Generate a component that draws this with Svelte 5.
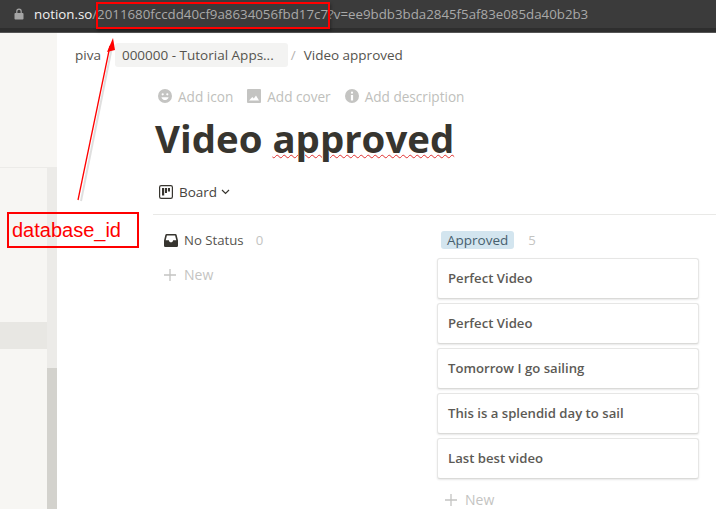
<script lang="ts">
  const cards = ['Perfect Video', 'Perfect Video', 'Tomorrow I go sailing', 'This is a splendid day to sail', 'Last best video'];
</script>

<div class="page">
  <header class="browser">
    <div class="omnibox">
      <svg class="lock" width="10" height="12" viewBox="0 0 10 12"><path d="M2.2 5V3.4a2.8 2.8 0 0 1 5.6 0V5h.9c.4 0 .8.4.8.8v5c0 .5-.4.8-.8.8H1.3c-.4 0-.8-.3-.8-.8v-5c0-.4.4-.8.8-.8zm1.2 0h3.2V3.4a1.6 1.6 0 0 0-3.2 0z" fill="#a5a5a5" fill-rule="evenodd"/></svg>
      <span class="host">notion.so</span><span class="path">/2011680fccdd40cf9a8634056fbd17c7?v=ee9bdb3bda2845f5af83e085da40b2b3</span>
    </div>
  </header>

  <div class="body">
    <aside class="sidebar">
      <div class="side-top"></div>
      <div class="side-list">
        <div class="side-rows">
          <div class="gap-a"></div>
          <div class="active-row"></div>
        </div>
        <div class="scrollbar"><div class="thumb"></div></div>
      </div>
    </aside>

    <main class="main">
      <nav class="crumbs">
        <span class="crumb">piva</span>
        <span class="crumb chip">000000 - Tutorial Apps...</span>
        <span class="sep">/</span>
        <span class="crumb">Video approved</span>
      </nav>

      <div class="head">
        <div class="actions">
          <span class="action">
            <svg width="14" height="14" viewBox="0 0 14 14"><path d="M7 0a7 7 0 1 1 0 14A7 7 0 0 1 7 0zM4.7 4.2a1.1 1.1 0 1 0 0 2.2 1.1 1.1 0 0 0 0-2.2zm4.6 0a1.1 1.1 0 1 0 0 2.2 1.1 1.1 0 0 0 0-2.2zM3.4 8.2c.5 1.8 2 2.9 3.6 2.9s3.1-1.1 3.6-2.9z" fill="#c4c4c2" fill-rule="evenodd"/></svg>
            Add icon
          </span>
          <span class="action">
            <svg width="14" height="14" viewBox="0 0 14 14"><path d="M1 0h12a1 1 0 0 1 1 1v12a1 1 0 0 1-1 1H1a1 1 0 0 1-1-1V1a1 1 0 0 1 1-1zm1 11.5h10L9 6.5l-2.2 3-1.5-1.6z" fill="#c4c4c2" fill-rule="evenodd"/></svg>
            Add cover
          </span>
          <span class="action">
            <svg width="14" height="14" viewBox="0 0 14 14"><path d="M7 0a7 7 0 1 1 0 14A7 7 0 0 1 7 0zm0 2.6a1.1 1.1 0 1 0 0 2.2 1.1 1.1 0 0 0 0-2.2zM5.9 6v5.4h2.2V6z" fill="#c4c4c2" fill-rule="evenodd"/></svg>
            Add description
          </span>
        </div>
        <h1><span>Video</span> <span class="squiggle">approved</span></h1>
        <div class="view">
          <svg width="14" height="14" viewBox="0 0 14 14"><rect x=".6" y=".6" width="12.8" height="12.8" rx="1.6" fill="none" stroke="#37352f" stroke-width="1.2"/><path d="M3 3h2.2v7.6H3zM6 3h2v5H6zM8.9 3h2.1v3.4H8.9z" fill="#37352f"/></svg>
          <span>Board</span>
          <svg width="9" height="6" viewBox="0 0 9 6"><path d="M1 1l3.5 3.5L8 1" fill="none" stroke="#37352f" stroke-width="1.2"/></svg>
        </div>
      </div>

      <section class="board">
        <div class="col first">
          <div class="col-head">
            <svg width="14" height="13" viewBox="0 0 14 13"><path d="M2.6 0h8.8c.6 0 1 .3 1.2.8L14 6.4v5c0 .9-.7 1.6-1.6 1.6H1.6C.7 13 0 12.3 0 11.4v-5L1.4.8C1.6.3 2 0 2.6 0zm.3 1.4L1.7 6.2h3.2c0 1.2 1 2.1 2.1 2.1s2.1-.9 2.1-2.1h3.2l-1.2-4.8z" fill="#37352f" fill-rule="evenodd"/></svg>
            <span class="col-name">No Status</span>
            <span class="count">0</span>
          </div>
          <div class="new">
            <svg width="12" height="12" viewBox="0 0 12 12"><path d="M6 0v12M0 6h12" stroke="#c4c4c2" stroke-width="1.3"/></svg>
            New
          </div>
        </div>

        <div class="col second">
          <div class="col-head tagged">
            <span class="tag">Approved</span>
            <span class="count">5</span>
          </div>
          {#each cards as card}
            <div class="card">{card}</div>
          {/each}
          <div class="new">
            <svg width="12" height="12" viewBox="0 0 12 12"><path d="M6 0v12M0 6h12" stroke="#c4c4c2" stroke-width="1.3"/></svg>
            New
          </div>
        </div>
      </section>
    </main>
  </div>

  <!-- annotation laid over the screenshot -->
  <div class="mark-id"></div>
  <svg class="arrow" width="716" height="509" viewBox="0 0 716 509">
    <path d="M79 200 L110 46" stroke="#c9c9c9" stroke-width="2" opacity=".6" transform="translate(2 1)" fill="none"/>
    <path d="M78 200 L110 46" stroke="#ff0000" stroke-width="1.3" fill="none"/>
    <path d="M113 38 L107 52 L115 50 Z" fill="#ff0000"/>
  </svg>
  <div class="label">database_id</div>
</div>

<style>
  :global(body) {
    margin: 0;
    background: #fff;
  }

  .page {
    position: relative;
    width: 716px;
    height: 509px;
    overflow: hidden;
    display: flex;
    flex-direction: column;
    font-family: "Open Sans", "Noto Sans", sans-serif;
    color: #37352f;
  }

  .browser {
    flex: none;
    height: 33px;
    box-sizing: border-box;
    background: #2e2e2e;
    border-bottom: 1px solid #555;
    padding-bottom: 4px;
  }

  .omnibox {
    height: 28px;
    background: #3b3b3b;
    display: flex;
    align-items: center;
    padding: 0 0 0 14px;
    font-size: 13.3px;
    white-space: nowrap;
  }

  .lock {
    margin-right: 10px;
  }

  .host {
    color: #f1f1f1;
  }

  .path {
    color: #a9a9a9;
  }

  .body {
    flex: 1;
    display: flex;
    min-height: 0;
  }

  .sidebar {
    flex: none;
    width: 57px;
    background: #f7f6f3;
    display: flex;
    flex-direction: column;
  }

  .side-top {
    flex: none;
    height: 134px;
    border-bottom: 1px solid #ecebe8;
  }

  .side-list {
    flex: 1;
    display: flex;
  }

  .side-rows {
    flex: 1;
  }

  .gap-a {
    height: 154px;
  }

  .active-row {
    height: 27px;
    background: #e8e7e3;
  }

  .scrollbar {
    flex: none;
    width: 10px;
    background: #ecebe8;
    padding-top: 200px;
    box-sizing: border-box;
  }

  .thumb {
    height: 141px;
    background: #d3d2cd;
  }

  .main {
    flex: 1;
    min-width: 0;
  }

  .crumbs {
    display: flex;
    align-items: center;
    height: 24px;
    margin-top: 10px;
    padding-left: 18px;
    font-size: 13.5px;
    white-space: nowrap;
  }

  .crumb {
    color: #55534e;
  }

  .chip {
    margin-left: 14px;
    background: #f3f3f2;
    border-radius: 3px;
    padding: 0 14px 0 7px;
    line-height: 24px;
  }

  .sep {
    color: #b5b4b1;
    margin: 0 8px 0 3px;
  }

  .head {
    padding-left: 100px;
  }

  .actions {
    display: flex;
    gap: 14px;
    margin-top: 18px;
    height: 22px;
    align-items: center;
    padding-left: 1px;
  }

  .action {
    display: flex;
    align-items: center;
    gap: 6px;
    font-size: 13.6px;
    color: #c0bfbc;
    white-space: nowrap;
  }

  h1 {
    margin: 5px 0 0 -2px;
    font-size: 38.4px;
    line-height: 52px;
    font-weight: 700;
    color: #37352f;
    white-space: nowrap;
  }

  .squiggle {
    text-decoration: underline wavy #e03030 1px;
    text-underline-offset: 1px;
  }

  .view {
    display: flex;
    align-items: center;
    gap: 6px;
    margin-top: 16px;
    height: 24px;
    padding-left: 2px;
    font-size: 13.5px;
    color: #45433e;
  }

  .view svg:last-child {
    margin-left: -2px;
  }

  .board {
    margin: 10px 0 0 96px;
    border-top: 1px solid #e9e9e7;
    display: flex;
    align-items: flex-start;
  }

  .col.first {
    width: 284px;
    padding-left: 11px;
    box-sizing: border-box;
  }

  .col.second {
    width: 262px;
    flex: none;
  }

  .col-head {
    display: flex;
    align-items: center;
    height: 20px;
    margin-top: 15px;
    font-size: 13.2px;
    color: #55534e;
  }

  .col-name {
    margin-left: 6px;
  }

  .count {
    margin-left: 12px;
    color: #c4c4c2;
  }

  .first .new {
    margin-top: 15px;
  }

  .tagged {
    margin-left: 4px;
    margin-bottom: 8px;
  }

  .tag {
    background: #d3e5ef;
    color: #47606e;
    border-radius: 3px;
    padding: 0 6px;
    line-height: 18px;
    font-size: 13.5px;
  }

  .tagged .count {
    margin-left: 14px;
  }

  .card {
    height: 41px;
    box-sizing: border-box;
    background: #fff;
    border: 1px solid #e6e6e5;
    border-bottom-color: #dadad8;
    border-radius: 3px;
    box-shadow: 0 1px 2px rgba(15, 15, 15, 0.1);
    margin-bottom: 4px;
    padding: 0 10px;
    line-height: 38px;
    font-size: 13.15px;
    font-weight: 600;
    color: #5c5a55;
    white-space: nowrap;
  }

  .new {
    display: flex;
    align-items: center;
    gap: 8px;
    font-size: 14px;
    color: #c4c4c2;
  }

  .second .new {
    margin: 11px 0 0 8px;
  }

  .mark-id {
    position: absolute;
    left: 96px;
    top: 2px;
    width: 234px;
    height: 27px;
    box-sizing: border-box;
    border: 2px solid #f00;
    box-shadow: 1px 2px 3px rgba(0, 0, 0, 0.35);
  }

  .arrow {
    position: absolute;
    left: 0;
    top: 0;
    pointer-events: none;
  }

  .label {
    position: absolute;
    left: 7px;
    top: 212px;
    width: 132px;
    height: 36px;
    box-sizing: border-box;
    border: 2px solid #f00;
    padding-left: 3px;
    line-height: 32px;
    font-family: "Liberation Sans", Arial, sans-serif;
    font-size: 20px;
    color: #f00;
    white-space: nowrap;
  }
</style>
